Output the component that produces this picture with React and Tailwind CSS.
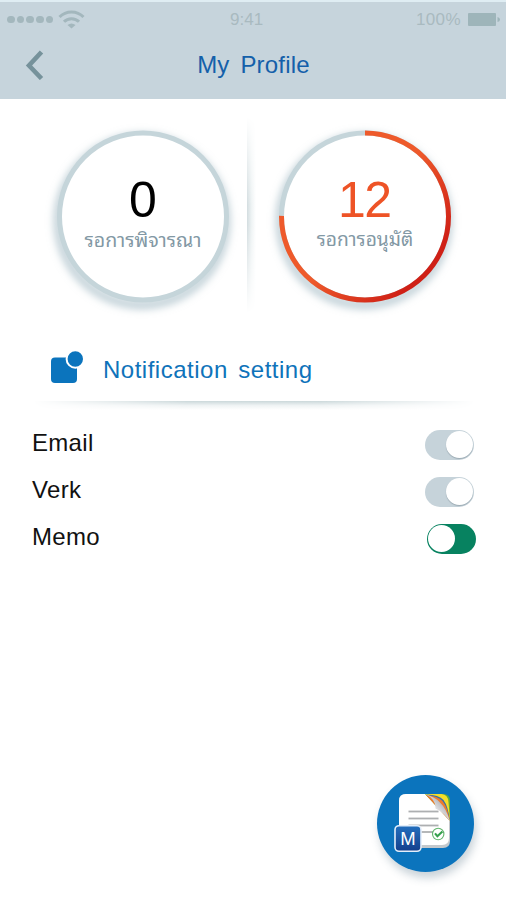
import { useState } from "react";

const SETTINGS = [
  { id: "email", label: "Email", on: false },
  { id: "verk", label: "Verk", on: false },
  { id: "memo", label: "Memo", on: true },
];

export default function App() {
  const [settings, setSettings] = useState(SETTINGS);

  const toggle = (id) =>
    setSettings((list) => list.map((s) => (s.id === id ? { ...s, on: !s.on } : s)));

  return (
    <div className="relative h-[900px] w-[507px] overflow-hidden bg-white font-['Liberation_Sans','Noto_Sans_Thai_Looped','Loma','Garuda','Noto_Sans_Thai',sans-serif]">
      <Header />

      {/* Counters */}
      <section className="flex h-[221px] pt-[18px]">
        <div className="w-[247px] pt-[9px] pl-[53px]">
          <Counter value="0" label="รอการพิจารณา" tone="text-black" labelClass="text-[19.6px]" />
        </div>
        <div className="h-[196px] w-[9px] bg-linear-to-r from-[#d3dde0] via-[#eef3f4] to-white mask-y-from-55%" />
        <div className="pt-[9px] pl-[19px]">
          <Counter value="12" label="รอการอนุมัติ" tone="text-[#ee5326]" labelClass="text-[19.2px]" progress={0.75} />
        </div>
      </section>

      {/* Notification settings */}
      <section>
        <div className="flex h-[81px] items-center pt-[18px] pl-[50px]">
          <NotificationIcon className="mb-[5px] h-[34px] w-[34px]" />
          <h2 className="pl-[19px] text-[24px] leading-7 tracking-[0.5px] text-[#0f73ba] [word-spacing:3.4px]">
            Notification setting
          </h2>
        </div>
        <div className="ml-[33px] h-[9px] w-[442px] bg-linear-to-b from-[#cbd8da] via-[#eff3f4] to-white mask-x-from-65%" />

        <ul className="pt-[11px] pr-[31px] pl-[32px]">
          {settings.map((s) => (
            <li key={s.id} className="flex h-[47px] items-center justify-between">
              <span className="pb-[3px] text-[24px] leading-7 tracking-[0.3px] text-[#111]">{s.label}</span>
              <Toggle on={s.on} onClick={() => toggle(s.id)} />
            </li>
          ))}
        </ul>
      </section>

      {/* Floating memo button */}
      <button className="absolute top-[775px] left-[377px] h-[97px] w-[97px] rounded-full bg-[#0b74bd] shadow-[2px_6px_8px_rgba(80,110,130,0.3)]">
        <MemoIcon className="h-[97px] w-[97px]" />
      </button>
    </div>
  );
}

function Header() {
  return (
    <header className="h-[99px] w-[506px] border-t-2 border-[#dfedf3] bg-[#c6d4dc]">
      <div className="grid h-[35px] grid-cols-[1fr_34px_1fr] items-center pr-[5px] pl-[7px] text-[17px] text-[#a9bac0]">
        <div className="flex items-center gap-[5px]">
          <div className="flex gap-[2px]">
            {[0, 1, 2, 3, 4].map((i) => (
              <span key={i} className="h-[7.7px] w-[7.7px] rounded-full bg-[#a3b7bd]" />
            ))}
          </div>
          <WifiIcon className="h-[19px] w-[27px]" />
        </div>
        <span className="-ml-[7px]">9:41</span>
        <div className="flex items-center justify-end gap-[7px]">
          <span className="tracking-[0.4px]">100%</span>
          <BatteryIcon className="h-[13px] w-[33px]" />
        </div>
      </div>

      <div className="grid h-[62px] grid-cols-[60px_1fr_60px] items-start pt-[13px]">
        <button className="pl-[25px]">
          <svg className="h-[30px] w-[20px]" viewBox="0 0 20 30" fill="none">
            <path d="M16.5 2 L4 15.5 L16.5 28.5" stroke="#76929b" strokeWidth="4.6" />
          </svg>
        </button>
        <h1 className="pt-px pl-px text-center text-[24px] leading-7 tracking-[0.2px] text-[#1460aa] [word-spacing:4px]">
          My Profile
        </h1>
      </div>
    </header>
  );
}

function Counter({ value, label, tone, labelClass, progress = 0 }) {
  const r = 83.5;
  const length = 2 * Math.PI * r;

  return (
    <div className="relative h-[180px] w-[180px]">
      <svg className="h-[180px] w-[180px] overflow-visible" viewBox="0 0 180 180" fill="none">
        <defs>
          {/* the arc is rotated by -90deg, so this axis is given in rotated space */}
          <linearGradient id="progress" gradientUnits="userSpaceOnUse" x1="90" y1="90" x2="40" y2="150">
            <stop offset="0" stopColor="#ee5a2b" />
            <stop offset="1" stopColor="#cf2016" />
          </linearGradient>
          <filter id="soft" x="-20%" y="-20%" width="140%" height="140%">
            <feGaussianBlur stdDeviation="4" />
          </filter>
        </defs>
        <circle cx="89" cy="95" r="84" stroke="#9db5c0" strokeOpacity="0.8" strokeWidth="7" filter="url(#soft)" />
        <circle cx="90" cy="90.5" r={r} fill="white" stroke="#c5d5da" strokeWidth="5" />
        {progress > 0 && (
          <circle
            cx="90"
            cy="90.5"
            r={r}
            stroke="url(#progress)"
            strokeWidth="5"
            strokeDasharray={`${length * progress} ${length}`}
            transform="rotate(-90 90 90.5)"
          />
        )}
      </svg>
      <div className="absolute inset-0 flex flex-col items-center pt-[44px]">
        <span className={`pr-[1.5px] text-[50px] leading-[60px] tracking-[-1.5px] ${tone}`}>{value}</span>
        <span className={`-mt-1 leading-7 whitespace-nowrap text-[#8298a4] ${labelClass}`}>{label}</span>
      </div>
    </div>
  );
}

function Toggle({ on, onClick }) {
  return (
    <button
      role="switch"
      aria-checked={on}
      onClick={onClick}
      className={`flex h-[30px] w-[49px] items-center rounded-full p-px ${
        on ? "bg-[#078260]" : "mr-[2px] justify-end bg-[#c6d3da]"
      }`}
    >
      <span
        className={`h-[27px] w-[27px] rounded-full bg-white ${
          on ? "" : "shadow-[0_1px_1px_rgba(90,110,120,0.4)]"
        }`}
      />
    </button>
  );
}

const WifiIcon = ({ className }) => (
  <svg className={className} viewBox="0 0 27 19" fill="none" stroke="#a3b7bd" strokeWidth="3">
    <path d="M1.5 7 C8 0.2 19 0.2 25.5 7" />
    <path d="M6 11.8 C10 7.6 17 7.6 21 11.8" />
    <path d="M9.5 15 Q13.5 12 17.5 15 L13.5 18.6 Z" fill="#a3b7bd" stroke="none" />
  </svg>
);

const BatteryIcon = ({ className }) => (
  <svg className={className} viewBox="0 0 33 13" fill="#9eb5ba">
    <rect width="28" height="13" rx="1" />
    <path d="M29.5 4 Q32 4.5 32 6.5 Q32 8.5 29.5 9 Z" />
  </svg>
);

const NotificationIcon = ({ className }) => (
  <svg className={className} viewBox="0 0 34 34" fill="#0b74bd">
    <rect x="1" y="7.5" width="26" height="25.5" rx="4" />
    <circle cx="25.3" cy="9" r="8.7" stroke="white" strokeWidth="2" />
  </svg>
);

const MemoIcon = ({ className }) => (
  <svg className={className} viewBox="0 0 97 97">
    <defs>
      <linearGradient id="memoTile" x1="0" y1="0" x2="0" y2="1">
        <stop offset="0" stopColor="#236fbe" />
        <stop offset="1" stopColor="#153f8c" />
      </linearGradient>
      <linearGradient id="curl" x1="0" y1="1" x2="1" y2="0">
        <stop offset="0.35" stopColor="#f4f4f5" />
        <stop offset="0.75" stopColor="#a9a9ad" />
      </linearGradient>
    </defs>

    {/* page with its shaded lower edge */}
    <path d="M29 19 H48 L73 44 V66 Q73 73 66 73 H29 Q22 73 22 66 V26 Q22 19 29 19 Z" fill="#c3c8cc" />
    <path d="M29 19 H48 L72 43 V63 Q72 70 65 70 H29 Q22 70 22 63 V26 Q22 19 29 19 Z" fill="white" />

    {/* coloured sheets behind the curled corner */}
    <path d="M48 19 H66 Q73 19 73 26 V46 Z" fill="#5fa93c" />
    <path d="M48 19 H64.5 Q71 19.5 71.5 27 L73 45 Z" fill="#f4dd2a" />
    <path d="M49 19.6 Q62 20 66.5 25 Q71 31 72.8 45 Z" fill="#2f6fae" />
    <path d="M49 20 Q61 21 65.5 26 Q70.5 32 72.8 46 Z" fill="#ee7b2c" />
    <path d="M48 19 Q58 22 62.5 27 Q69.5 33.5 73 46.5 Q67 37.5 58.5 33.5 Q59 24 48 19 Z" fill="url(#curl)" />

    {/* written lines */}
    <g stroke="#adafb1" strokeWidth="1.8">
      <path d="M31.5 36.5 H61.5" />
      <path d="M31.5 43.5 H61.5" />
      <path d="M31.5 50.5 H61.5" />
      <path d="M31.5 57 H56" />
    </g>

    <circle cx="61.2" cy="59" r="5.7" fill="white" stroke="#62b66e" strokeWidth="1.1" />
    <path d="M58 58.4 L60.4 61.2 L65.4 56.6" fill="none" stroke="#35a04d" strokeWidth="2.1" />

    {/* app tile */}
    <rect x="18" y="50.7" width="26" height="25.6" rx="4" fill="url(#memoTile)" stroke="#e4eefa" strokeWidth="1.6" />
    <text x="31" y="69.7" textAnchor="middle" fontSize="18.5" fill="white" className="font-['Liberation_Sans',sans-serif]">
      M
    </text>
  </svg>
);
